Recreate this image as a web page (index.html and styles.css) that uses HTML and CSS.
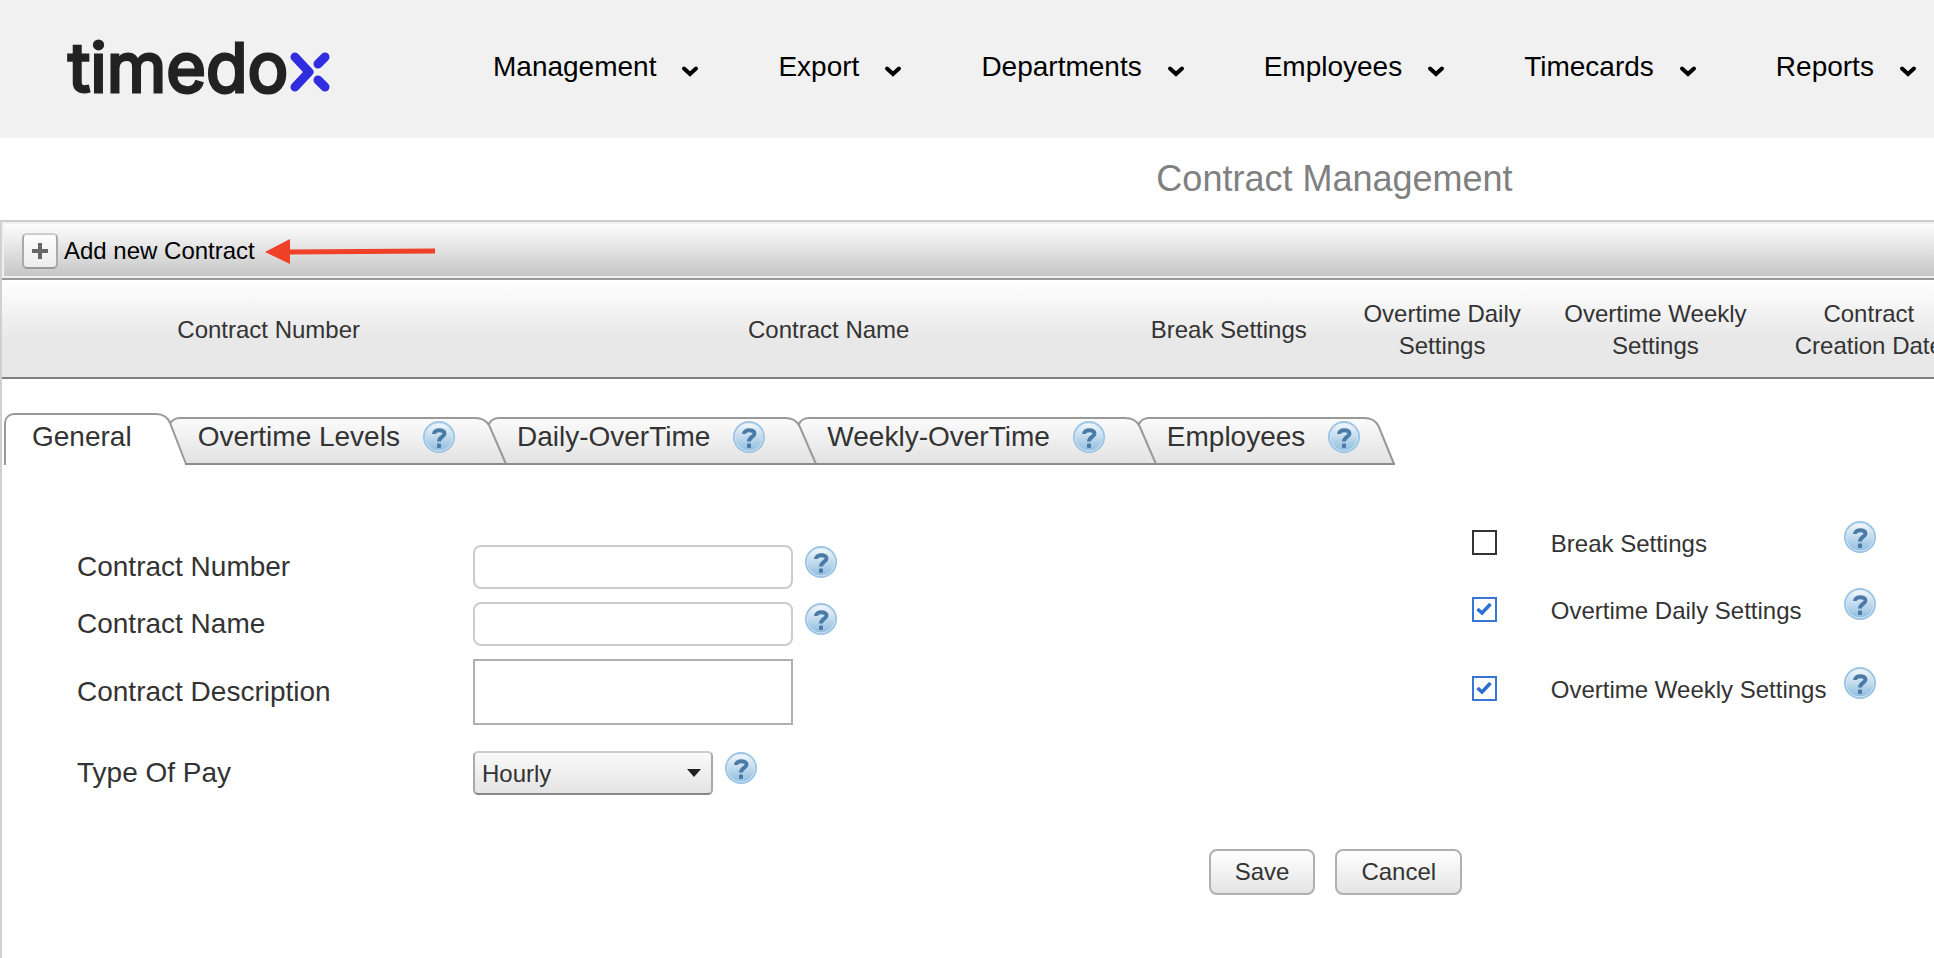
FILE: index.html
```html
<!DOCTYPE html>
<html lang="en">

<head>
    <meta charset="UTF-8">
    <meta name="viewport" content="width=device-width, initial-scale=1.0">
    <title>Contract Management</title>
    <link rel="stylesheet" href="styles.css">
</head>
<body>
    <!-- shared icons -->
    <svg class="defs" width="0" height="0" aria-hidden="true">
        <defs>
            <linearGradient id="helpFill" x1="0" y1="0" x2="0" y2="1">
                <stop offset="0" stop-color="#f4f8fb"/>
                <stop offset="1" stop-color="#8fbde0"/>
            </linearGradient>
            <linearGradient id="tabFill" x1="0" y1="0" x2="0" y2="1">
                <stop offset="0" stop-color="#fbfbfb"/>
                <stop offset="1" stop-color="#e2e2e2"/>
            </linearGradient>
            <symbol id="help" viewBox="0 0 32 32">
                <circle cx="16" cy="16" r="16" fill="#98c2e3"/>
                <circle cx="16" cy="16" r="14" fill="url(#helpFill)" stroke="#cfe3f3" stroke-width="1"/>
                <path d="M11 13C11 8 21.500 8 21.500 12.500C21.500 16 16 16 16 20.500" fill="none" stroke="#4a7ba6" stroke-width="4"/>
                <rect x="14" y="22.500" width="4" height="4.500" rx="1" fill="#4a7ba6"/>
            </symbol>
            <symbol id="chevron" viewBox="0 0 18 13">
                <path d="M3 3.500L9 9L15 3.500" fill="none" stroke="#000" stroke-width="4" stroke-linecap="round"/>
            </symbol>
            <symbol id="tabJoin" viewBox="0 0 32 52">
                <path d="M0 5C8 5 12 8 14.500 13L31 51H0Z" fill="url(#tabFill)"/>
                <path d="M14 11C16 7 19 5 24 5H32V51H31Z" fill="url(#tabFill)"/>
                <path d="M0 5C8 5 12 8 14.500 13L31 51M14 11C16 7 19 5 24 5H32" fill="none" stroke="#999" stroke-width="2"/>
                <path d="M0 51H32" stroke="#8c8c8c" stroke-width="2"/>
            </symbol>
        </defs>
    </svg>

    <header class="header">
        <a class="logo" href="#" aria-label="timedox">
            <span class="logo-text">timedo</span>
            <svg class="logo-mark" viewBox="0 0 40 40" aria-hidden="true">
                <path d="M5 5L19 20L5 35M35 5L28 12M28 28L35 35" fill="none" stroke="#302de0" stroke-width="9" stroke-linecap="round" stroke-linejoin="round"/>
            </svg>
        </a>
        <nav class="nav">
            <a href="#">Management <svg><use href="#chevron"/></svg></a>
            <a href="#">Export <svg><use href="#chevron"/></svg></a>
            <a href="#">Departments <svg><use href="#chevron"/></svg></a>
            <a href="#">Employees <svg><use href="#chevron"/></svg></a>
            <a href="#">Timecards <svg><use href="#chevron"/></svg></a>
            <a href="#">Reports <svg><use href="#chevron"/></svg></a>
        </nav>
    </header>

    <main class="page">
        <h1>Contract Management</h1>

        <section class="grid">
            <div class="toolbar">
                <button type="button" class="add">
                    <span class="add-icon">
                        <svg viewBox="0 0 16 16"><path d="M8 0V16M0 8H16" stroke="#666" stroke-width="4"/></svg>
                    </span>
                    Add new Contract
                </button>
                <svg class="arrow" viewBox="0 0 170 26" aria-hidden="true">
                    <path d="M0 14L25 1V26Z" fill="#ee4128"/>
                    <path d="M24 14L170 13" stroke="#ee4128" stroke-width="5"/>
                </svg>
            </div>

            <table class="contracts">
                <thead>
                    <tr>
                        <th class="col-number">Contract Number</th>
                        <th class="col-name">Contract Name</th>
                        <th class="col-small">Break Settings</th>
                        <th class="col-small">Overtime Daily Settings</th>
                        <th class="col-small">Overtime Weekly Settings</th>
                        <th class="col-small">Contract<br>Creation Date</th>
                        <td></td>
                    </tr>
                </thead>
            </table>

            <div class="tabs">
                <button type="button" class="tab active">General</button>
                <svg class="join" viewBox="0 0 32 52">
                    <path d="M14 13C15 8 19 5 24 5H32V51H30Z" fill="url(#tabFill)"/>
                    <path d="M0 1C7 1 12 4 14.500 11L30 51M14 11C16 7 19 5 24 5H32" fill="none" stroke="#999" stroke-width="2"/>
                    <path d="M29 51H32" stroke="#8c8c8c" stroke-width="2"/>
                </svg>
                <button type="button" class="tab">Overtime Levels <svg class="help"><use href="#help"/></svg></button>
                <svg class="join"><use href="#tabJoin"/></svg>
                <button type="button" class="tab">Daily-OverTime <svg class="help"><use href="#help"/></svg></button>
                <svg class="join"><use href="#tabJoin"/></svg>
                <button type="button" class="tab">Weekly-OverTime <svg class="help"><use href="#help"/></svg></button>
                <svg class="join"><use href="#tabJoin"/></svg>
                <button type="button" class="tab last">Employees <svg class="help"><use href="#help"/></svg></button>
                <svg class="join" viewBox="0 0 32 52">
                    <path d="M0 5C8 5 12 8 14.500 13L30 51H0Z" fill="url(#tabFill)"/>
                    <path d="M0 5C8 5 12 8 14.500 13L30 51" fill="none" stroke="#999" stroke-width="2"/>
                    <path d="M0 51H31" stroke="#8c8c8c" stroke-width="2"/>
                </svg>
            </div>

            <form id="contractForm">
                <div class="form-body">
                    <div class="fields">
                        <div class="field">
                            <label for="contractNumber">Contract Number</label>
                            <input type="text" id="contractNumber">
                            <svg class="help"><use href="#help"/></svg>
                        </div>
                        <div class="field">
                            <label for="contractName">Contract Name</label>
                            <input type="text" id="contractName">
                            <svg class="help"><use href="#help"/></svg>
                        </div>
                        <div class="field">
                            <label for="contractDescription">Contract Description</label>
                            <textarea id="contractDescription"></textarea>
                        </div>
                        <div class="field pay">
                            <label for="typeOfPay">Type Of Pay</label>
                            <div class="select">
                                <select id="typeOfPay">
                                    <option>Hourly</option>
                                    <option>Salary</option>
                                </select>
                                <svg viewBox="0 0 14 8"><path d="M0 0H14L7 8Z" fill="#222"/></svg>
                            </div>
                            <svg class="help"><use href="#help"/></svg>
                        </div>
                    </div>

                    <div class="options">
                        <div class="option">
                            <input type="checkbox" id="breakSettings">
                            <label for="breakSettings">Break Settings</label>
                            <svg class="help"><use href="#help"/></svg>
                        </div>
                        <div class="option">
                            <input type="checkbox" id="dailySettings" checked>
                            <label for="dailySettings">Overtime Daily Settings</label>
                            <svg class="help"><use href="#help"/></svg>
                        </div>
                        <div class="option weekly">
                            <input type="checkbox" id="weeklySettings" checked>
                            <label for="weeklySettings">Overtime Weekly Settings</label>
                            <svg class="help"><use href="#help"/></svg>
                        </div>
                    </div>
                </div>

                <div class="buttons">
                    <button type="submit">Save</button>
                    <button type="button">Cancel</button>
                </div>
            </form>
        </section>
    </main>
</body>

</html>
```
FILE: styles.css
```css
* {
    box-sizing: border-box;
}

body {
    margin: 0;
    min-height: 100vh;
    display: flex;
    flex-direction: column;
    font-family: "Liberation Sans", Arial, sans-serif;
    font-size: 24px;
    color: #333;
    background-color: #fff;
    overflow: hidden;
}

button, input, select, textarea {
    font: inherit;
    color: inherit;
}

.defs {
    position: absolute;
}

/* Header */
.header {
    display: flex;
    align-items: center;
    height: 138px;
    padding-left: 68px;
    background-color: #f1f1f1;
}

.logo {
    display: flex;
    flex: none;
    align-items: baseline;
    gap: 2px;
    width: 425px;
    padding-bottom: 4px;
    color: #222;
    text-decoration: none;
}

.logo-text {
    font-family: Inter, sans-serif;
    font-size: 68px;
    font-weight: 400;
    line-height: 80px;
    -webkit-text-stroke: 3px #222;
    stroke-linejoin: round;
}

.logo-mark {
    width: 40px;
    height: 40px;
}

.nav {
    display: flex;
    gap: 79px;
    padding-bottom: 4px;
}

.nav a {
    display: flex;
    align-items: center;
    gap: 25px;
    font-size: 28px;
    line-height: 32px;
    color: #000;
    text-decoration: none;
}

.nav svg {
    width: 18px;
    height: 13px;
    margin-top: 8px;
}

.page {
    display: flex;
    flex: 1;
    flex-direction: column;
    width: 138vw;
}

h1 {
    margin: 0;
    padding: 21px 0;
    font-size: 36px;
    font-weight: normal;
    line-height: 40px;
    text-align: center;
    color: #808080;
}

.grid {
    flex: 1;
    border-top: 2px solid #ccc;
    border-left: 2px solid #d0d0d0;
}

.toolbar {
    display: flex;
    align-items: center;
    gap: 10px;
    height: 56px;
    padding: 2px 0 0 18px;
    border: 2px solid #f0f0f0;
    border-width: 2px 0 2px 2px;
    background: linear-gradient(#fdfdfd, #c6c6c6) padding-box;
}

.add {
    display: flex;
    align-items: center;
    gap: 6px;
    padding: 0;
    border: 0;
    background: none;
    color: #000;
    cursor: pointer;
}

.add-icon {
    display: flex;
    align-items: center;
    justify-content: center;
    width: 36px;
    height: 36px;
    border: 2px solid #aaa;
    border-top-color: #ccc;
    border-bottom-color: #999;
    border-radius: 5px;
    background: linear-gradient(#fdfdfd, #ececec);
}

.add-icon svg {
    width: 16px;
    height: 16px;
}

.arrow {
    width: 170px;
    height: 26px;
}

.contracts {
    width: 100%;
    height: 101px;
    table-layout: fixed;
    border-collapse: separate;
    border-spacing: 0;
    border-top: 2px solid #999;
    border-bottom: 2px solid #808080;
    background: linear-gradient(#fff, #e8e8e8 60%);
}

.contracts th {
    padding: 2px 10px 0;
    font-weight: normal;
    line-height: 32px;
}

.col-number {
    width: 20%;
}

.col-name {
    width: 22%;
}

.col-small {
    width: 8%;
}

/* Tabs */
.tabs {
    display: flex;
    align-items: flex-end;
    padding: 34px 0 0 2px;
}

.tab {
    display: flex;
    align-items: center;
    gap: 23px;
    height: 48px;
    padding: 0 20px 8px 10px;
    border: 0;
    border-top: 2px solid #999;
    border-bottom: 2px solid #8c8c8c;
    background: linear-gradient(#fbfbfb, #e2e2e2);
    font-size: 28px;
    line-height: 32px;
    white-space: nowrap;
    cursor: pointer;
}

.tab.active {
    height: 52px;
    padding: 0 24px 6px 26px;
    border-left: 2px solid #999;
    border-bottom: 0;
    border-top-left-radius: 10px;
    background: #fff;
}

.tab.last {
    padding-right: 4px;
}

.join {
    flex: none;
    width: 32px;
    height: 52px;
}

.help {
    flex: none;
    width: 32px;
    height: 32px;
}

/* Form */
.form-body {
    display: grid;
    grid-template-columns: 55% 1fr;
    padding-top: 56px;
}

.fields {
    display: flex;
    flex-direction: column;
    gap: 13px;
    padding: 24px 0 0 75px;
}

.field {
    display: flex;
    align-items: center;
    gap: 12px;
}

.field label {
    width: 384px;
    font-size: 28px;
    line-height: 32px;
}

.field .help {
    margin-bottom: 10px;
}

.pay {
    margin-top: 13px;
}

.field input, .field textarea {
    width: 320px;
    height: 44px;
    padding: 0 8px;
    border: 2px solid #ccc;
    border-radius: 8px;
    background-color: #fff;
}

.field textarea {
    height: 66px;
    border-color: #b0b0b0;
    border-radius: 0;
    resize: none;
}

.select {
    display: grid;
    align-items: center;
    width: 240px;
}

.select select, .select svg {
    grid-area: 1 / 1;
}

.select select {
    appearance: none;
    height: 44px;
    padding: 0 7px;
    border: 2px solid #aaa;
    border-top-color: #ccc;
    border-bottom-color: #888;
    border-radius: 5px;
    background: linear-gradient(#fafafa, #e4e4e4);
}

.select svg {
    justify-self: end;
    width: 14px;
    height: 8px;
    margin-right: 12px;
    pointer-events: none;
}

.options {
    display: flex;
    flex-direction: column;
    gap: 35px;
    padding-left: 3px;
}

.option {
    display: flex;
    align-items: center;
    height: 32px;
}

.option.weekly {
    margin-top: 12px;
}

.option label {
    width: 293px;
    padding-top: 14px;
    line-height: 32px;
}

.option input {
    appearance: none;
    width: 25px;
    height: 25px;
    margin: 10px 54px 0 0;
    border: 2px solid #333;
    background-color: #fff;
}

.option input:checked {
    border-color: #3875d7;
    background: url("data:image/svg+xml,%3Csvg xmlns='http://www.w3.org/2000/svg' viewBox='0 0 16 14'%3E%3Cpath d='M1.500 7L6 11L14.500 2' fill='none' stroke='%232f6fd0' stroke-width='3.500'/%3E%3C/svg%3E") center / 16px 14px no-repeat;
}

.buttons {
    display: flex;
    justify-content: center;
    gap: 20px;
    padding-top: 54px;
}

.buttons button {
    height: 46px;
    padding: 0 24px;
    border: 2px solid #b0b0b0;
    border-radius: 8px;
    background: linear-gradient(#fff, #e4e4e4);
    cursor: pointer;
}
```
